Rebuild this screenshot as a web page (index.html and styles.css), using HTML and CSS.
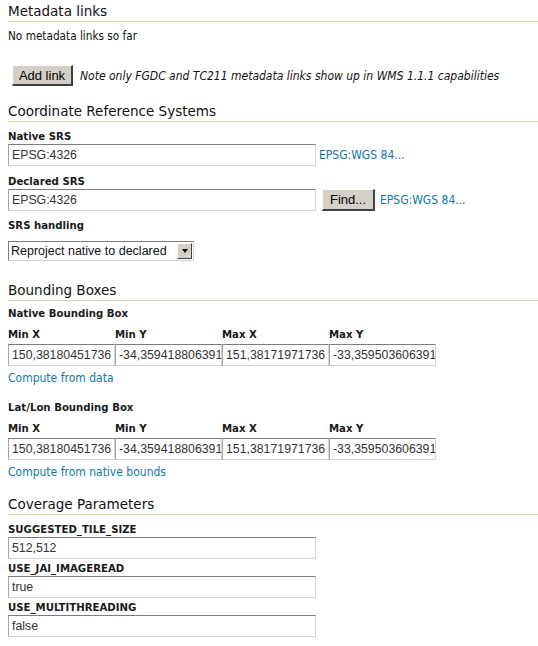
FILE: index.html
```html
<!DOCTYPE html>
<html lang="en">
<head>
<meta charset="utf-8">
<title>Layer resource</title>
<link rel="stylesheet" href="styles.css">
</head>
<body>
<div class="page">
  <h2 class="section-title first">Metadata links</h2>
  <p class="text empty-note">No metadata links so far</p>
  <div class="button-row">
    <button class="btn add-btn" type="button">Add link</button>
    <span class="note">Note only FGDC and TC211 metadata links show up in WMS 1.1.1 capabilities</span>
  </div>

  <h2 class="section-title">Coordinate Reference Systems</h2>
  <div class="field field-first">
    <div class="field-label">Native SRS</div>
    <div class="field-row">
      <input class="text-input wide" type="text" value="EPSG:4326">
      <a class="link srs-link" href="#">EPSG:WGS 84...</a>
    </div>
  </div>
  <div class="field field-next">
    <div class="field-label">Declared SRS</div>
    <div class="field-row">
      <input class="text-input wide" type="text" value="EPSG:4326">
      <button class="btn find-btn" type="button">Find...</button>
      <a class="link find-link" href="#">EPSG:WGS 84...</a>
    </div>
  </div>
  <div class="field field-handling">
    <div class="field-label">SRS handling</div>
    <div class="select-box">
      <select class="select">
        <option>Reproject native to declared</option>
      </select>
      <span class="select-arrow"><span class="tri"></span></span>
    </div>
  </div>

  <h2 class="section-title bbox-title">Bounding Boxes</h2>
  <div class="bbox bbox-native">
    <div class="field-label">Native Bounding Box</div>
    <div class="bbox-grid">
      <div class="field-label">Min X</div>
      <div class="field-label">Min Y</div>
      <div class="field-label">Max X</div>
      <div class="field-label">Max Y</div>
      <input class="text-input cell" type="text" value="150,38180451736">
      <input class="text-input cell" type="text" value="-34,359418806391">
      <input class="text-input cell" type="text" value="151,38171971736">
      <input class="text-input cell" type="text" value="-33,359503606391">
    </div>
    <a class="link compute" href="#">Compute from data</a>
  </div>
  <div class="bbox bbox-latlon">
    <div class="field-label">Lat/Lon Bounding Box</div>
    <div class="bbox-grid">
      <div class="field-label">Min X</div>
      <div class="field-label">Min Y</div>
      <div class="field-label">Max X</div>
      <div class="field-label">Max Y</div>
      <input class="text-input cell" type="text" value="150,38180451736">
      <input class="text-input cell" type="text" value="-34,359418806391">
      <input class="text-input cell" type="text" value="151,38171971736">
      <input class="text-input cell" type="text" value="-33,359503606391">
    </div>
    <a class="link compute" href="#">Compute from native bounds</a>
  </div>

  <h2 class="section-title coverage-title">Coverage Parameters</h2>
  <div class="param param-first">
    <div class="field-label">SUGGESTED_TILE_SIZE</div>
    <input class="text-input wide" type="text" value="512,512">
  </div>
  <div class="param">
    <div class="field-label">USE_JAI_IMAGEREAD</div>
    <input class="text-input wide" type="text" value="true">
  </div>
  <div class="param">
    <div class="field-label">USE_MULTITHREADING</div>
    <input class="text-input wide" type="text" value="false">
  </div>
</div>
</body>
</html>
```

FILE: styles.css
```css
html, body {
  margin: 0;
  padding: 0;
  background: #ffffff;
}

body {
  font-family: "DejaVu Sans Condensed", "DejaVu Sans", sans-serif;
  font-stretch: condensed;
  font-size: 11.7px;
  line-height: 14px;
  color: #111111;
}

.page {
  padding-left: 8px;
}

.section-title {
  margin: 17px 0 0 0;
  padding: 0 0 2px 0;
  font-family: "DejaVu Sans", sans-serif;
  font-stretch: normal;
  font-weight: normal;
  font-size: 13.5px;
  line-height: 16px;
  color: #111111;
  border-bottom: 1px solid #c9dca8;
}

.section-title.first {
  margin-top: 3px;
}

.section-title.bbox-title {
  margin-top: 21px;
}

.text {
  margin: 0;
}

.empty-note {
  margin-top: 7px;
}

.button-row {
  margin-top: 22px;
  display: flex;
  align-items: center;
}

.btn {
  box-sizing: border-box;
  height: 21px;
  margin: 0;
  padding: 0 4px;
  font-family: "Liberation Sans", Arial, sans-serif;
  font-size: 13px;
  white-space: nowrap;
  color: #000000;
  background: #d4d0c8;
  border-style: solid;
  border-width: 1px 2px 2px 1px;
  border-color: #ffffff #404040 #404040 #ffffff;
  border-radius: 0;
  line-height: 17px;
}

.add-btn {
  margin-left: 4px;
  width: 61px;
}

.note {
  margin-left: 7px;
  font-size: 12px;
  font-style: italic;
}

.field-label {
  font-size: 11.3px;
  font-weight: bold;
  color: #1a1a1a;
}

.field-first {
  margin-top: 8px;
}

.field-next {
  margin-top: 9px;
}

.field-handling {
  margin-top: 8px;
}

.field-row {
  display: flex;
  align-items: center;
}

.text-input {
  box-sizing: border-box;
  height: 22px;
  margin: 0;
  padding: 0 3px;
  font-family: "Liberation Sans", Arial, sans-serif;
  font-size: 12.3px;
  color: #333333;
  background: #ffffff;
  border-style: solid;
  border-width: 1px;
  border-color: #7c7c7c #d2d2d2 #d2d2d2 #a5a5a5;
  border-radius: 0;
  outline: none;
}

.text-input.wide {
  width: 308px;
  display: block;
}

.link {
  font-size: 12px;
  color: #0f78a3;
  text-decoration: none;
}

.srs-link {
  margin-left: 3px;
}

.find-btn {
  margin-left: 6px;
  width: 53px;
  height: 22px;
}

.find-link {
  margin-left: 5px;
}

.select-box {
  margin-top: 8px;
  box-sizing: border-box;
  display: inline-flex;
  align-items: stretch;
  width: 186px;
  height: 20px;
  border-style: solid;
  border-width: 1px;
  border-color: #7c7c7c #d2d2d2 #d2d2d2 #7c7c7c;
  background: #ffffff;
  vertical-align: top;
}

.select {
  flex: 1;
  min-width: 0;
  margin: 0;
  padding: 0 0 0 2px;
  border: none;
  outline: none;
  background: #ffffff;
  appearance: none;
  -webkit-appearance: none;
  font-family: "Liberation Sans", Arial, sans-serif;
  font-size: 12.5px;
  color: #111111;
}

.select-arrow {
  box-sizing: border-box;
  width: 15px;
  margin: 1px 1px 1px 0;
  background: #d4d0c8;
  border-style: solid;
  border-width: 1px;
  border-color: #ffffff #404040 #404040 #ffffff;
  display: flex;
  align-items: center;
  justify-content: center;
}

.tri {
  width: 0;
  height: 0;
  border-left: 3.5px solid transparent;
  border-right: 3.5px solid transparent;
  border-top: 4px solid #000000;
}

.bbox-native {
  margin-top: 6px;
}

.bbox-latlon {
  margin-top: 16px;
}

.bbox-grid {
  display: grid;
  grid-template-columns: repeat(4, 107px);
  margin-top: 7px;
  row-gap: 2px;
}

.text-input.cell {
  width: 107px;
  padding: 0 0 0 3px;
}

.compute {
  display: block;
  margin-top: 5px;
  width: max-content;
}

.coverage-title {
  margin-top: 17px;
}

.param {
  margin-top: 3px;
}

.param-first {
  margin-top: 8px;
}
```
